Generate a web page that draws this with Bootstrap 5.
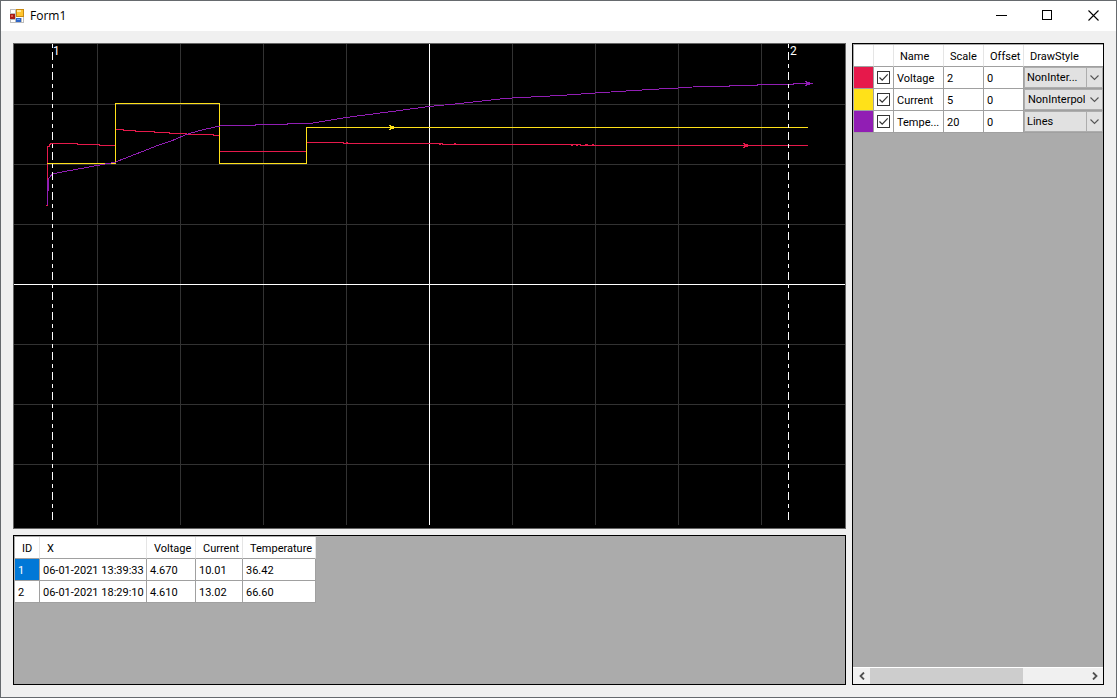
<!DOCTYPE html>
<html lang="en">
<head>
<meta charset="utf-8">
<meta name="viewport" content="width=device-width, initial-scale=1">
<title>Form1</title>
<link rel="stylesheet" href="https://cdn.jsdelivr.net/npm/bootstrap@5.3.0/dist/css/bootstrap.min.css">
<style>
body { font-family: Roboto, "Liberation Sans", sans-serif; font-size: 11px; line-height: 14px; color: #000; background: #f0f0f0; }
.app-window { border: 1px solid #666a6e; background: #f0f0f0; }
.title-bar { height: 30px; background: #fff; padding-left: 8px; }
.title-text { font-family: "Open Sans", sans-serif; font-size: 12px; line-height: 16px; margin-left: 5px; }
.win-btn { width: 46px; border: 0; padding: 0; background: none; }
.win-btn:hover { background: #e5e5e5; }
.workspace { display: grid; grid-template-columns: minmax(0, 1fr) 252px; grid-template-rows: minmax(0, 1fr) 150px; gap: 6px; padding: 12px; }
.plot-panel { border: 1px solid #646464; background: #000; }
.plot-panel svg { font-size: 12px; }
.side-panel { grid-column: 2; grid-row: 1 / span 2; }
.data-panel { border: 1px solid #000; background: #ababab; }
.grid-table { table-layout: fixed; border-collapse: separate; border-spacing: 0; margin: 1px 0 0 1px; background: #fff; }
.grid-table th, .grid-table td { height: 22px; padding: 2px 0 0 3px; border-right: 1px solid #a0a0a0; border-bottom: 1px solid #a0a0a0; white-space: nowrap; overflow: hidden; vertical-align: middle; }
.grid-table th { font-weight: 400; padding-left: 7px; border-right-color: #e5e5e5; }
.grid-table td.tick-cell { padding-top: 0; }
.grid-table .picked { background: #0078d7; color: #fff; }
.side-table { width: calc(100% - 1px); }
.side-table th { padding-left: 6px; }
.side-table td.combo-cell { padding: 0; border-right: 0; }
.side-table th:last-child { border-right: 0; }
.swatch-red { background: #e6194b; } .swatch-yellow { background: #ffe119; } .swatch-purple { background: #911eb4; }
.tick { appearance: none; display: block; width: 13px; height: 13px; margin: 0; border: 1px solid #333; background: #fff; }
.tick:checked { background: #fff url("data:image/svg+xml,%3Csvg xmlns='http://www.w3.org/2000/svg' viewBox='0 0 11 11'%3E%3Cpath d='M1.5 5.5l2.7 2.7L9.7 2.3' fill='none' stroke='%23333' stroke-width='1.2'/%3E%3C/svg%3E") center / 11px 11px no-repeat; }
.combo { appearance: none; display: block; width: 100%; height: 21px; border: 1px solid #adadad; border-radius: 0; padding: 1px 17px 0 2px; color: #000; line-height: 14px; background: #e1e1e1 url("data:image/svg+xml,%3Csvg xmlns='http://www.w3.org/2000/svg' viewBox='0 0 16 19'%3E%3Cpath d='M.5 0v19' stroke='%23adadad'/%3E%3Cpath d='M4.500 7.500l4 4 4-4' fill='none' stroke='%23555' stroke-width='1.1'/%3E%3C/svg%3E") right center / 16px 19px no-repeat; }
.combo-flat { background-image: url("data:image/svg+xml,%3Csvg xmlns='http://www.w3.org/2000/svg' viewBox='0 0 16 19'%3E%3Cpath d='M4.500 7.500l4 4 4-4' fill='none' stroke='%23555' stroke-width='1.1'/%3E%3C/svg%3E"); padding-left: 3px; }
.h-scroll { height: 17px; background: #f0f0f0; border-top: 1px solid #fff; }
.h-scroll button { width: 17px; border: 0; padding: 0; background: none; }
.h-thumb { width: 71%; background: #cdcdcd; }
</style>
</head>
<body>
<div class="app-window vh-100 d-flex flex-column">
  <header class="title-bar d-flex align-items-center flex-shrink-0">
    <svg width="16" height="16" viewBox="0 0 16 16" aria-hidden="true" shape-rendering="crispEdges">
      <path fill="#bdbdbd" d="M1 1h14v14H1z"/>
      <path fill="#fff" d="M2 2h4v3H2zM2 12h4v2H2zM7 9h7v1H7zM13 10h1v4h-1z"/>
      <path fill="#a81c14" d="M1 6h5v5H1z"/><path fill="#e0584a" d="M2 7h2v2H2z"/>
      <path fill="#c98a10" d="M7 1h8v8H7z"/><path fill="#ffc52e" d="M8 2h6v6H8z"/><path fill="#ffe79a" d="M8 2h4v2H8z"/>
      <path fill="#2e66c8" d="M7 10h5v4H7z"/><path fill="#6fa8f5" d="M8 11h3v1H8z"/>
    </svg>
    <span class="title-text me-auto">Form1</span>
    <button class="win-btn align-self-stretch" aria-label="Minimize"><svg width="11" height="12" class="d-block mx-auto" shape-rendering="crispEdges"><path d="M0 5.500h11" stroke="#000"/></svg></button>
    <button class="win-btn align-self-stretch" aria-label="Maximize"><svg width="11" height="12" class="d-block mx-auto" shape-rendering="crispEdges"><path d="M.5.5h9v9h-9z" fill="none" stroke="#000"/></svg></button>
    <button class="win-btn align-self-stretch" aria-label="Close"><svg width="11" height="12" class="d-block mx-auto"><path d="M.5.5l10 10M10.500.5l-10 10" stroke="#000" stroke-width="1.1"/></svg></button>
  </header>

  <main class="workspace flex-grow-1">
    <section class="plot-panel overflow-hidden" aria-label="Plot">
      <svg class="d-block w-100 h-100" viewBox="14 44 831 484" shape-rendering="crispEdges" fill="none">
        <path stroke="#323232" d="M14 104.500h831M14 164.500h831M14 224.500h831M14 344.500h831M14 404.500h831M14 464.500h831M97.500 44v481M180.500 44v481M263.500 44v481M346.500 44v481M512.500 44v481M595.500 44v481M678.500 44v481M761.500 44v481"/>
        <path stroke="#fff" d="M14 284.500h831M429.500 44v481"/>
        <!-- voltage -->
        <path stroke="#e6194b" d="M46 205.500h1.500V146.500h2v-2h1v-1H77.500v1H99.500v1H115.500V129.500H123.500v1H135.500v1H154.500v1H169.500v1H186.500v1H213.500v1H219.500V151.500H306.500V142.500H343.500v1H442.500v1H580.500v1H808"/>
        <path stroke="#e6194b" d="M346 142.500h2M439 144.500h2M454 143.500h2M571 145.500h2M576 145.500h2M585 144.500h3M592 144.500h2"/>
        <path fill="#e6194b" d="M743 143h2v1h3v1h1v1h-1v1h-3v1h-2v-1h1v-3h-1z"/>
        <!-- current -->
        <path stroke="#ffe119" d="M47 163.500H115.500V103.500H219.500V163.500H306.500V127.500H808"/>
        <path fill="#ffe119" d="M389 125h2v1h3v3h-3v1h-2v-1h1v-3h-1z"/>
        <!-- temperature -->
        <path stroke="#911eb4" d="M47.500 205V180M48.500 190.500V178.500L51.500 175 54 173.500 116 162 118 161 145 150.500 155 146.500 175 139.500 186 134.500 200 130.500 215 127 222 125.500H255.500v-1H287.500v-1H310L346 117.500 392 111.500 429 106.500 455 104 500 99 512 98 560 95.500 595 93 650 89.500 678 88 700 86.500H729.500v-1H757.500v-1H793.500v-1H813"/>
        <path fill="#911eb4" d="M805 81h2v1h3v3h-3v1h-2v-1h1v-3h-1z"/>
        <!-- cursors -->
        <path stroke="#fff" stroke-dasharray="4 4 8 4" d="M52.500 44V521M788.500 44V521"/>
        <text x="53" y="55" fill="#fff">1</text>
        <text x="790" y="55" fill="#fff">2</text>
      </svg>
    </section>

    <section class="data-panel overflow-hidden" aria-label="Cursor values">
      <table class="grid-table" style="width:301px">
        <colgroup><col style="width:25px"><col style="width:107px"><col style="width:49px"><col style="width:47px"><col style="width:73px"></colgroup>
        <thead><tr><th>ID</th><th>X</th><th>Voltage</th><th>Current</th><th>Temperature</th></tr></thead>
        <tbody>
          <tr><td class="picked">1</td><td>06-01-2021 13:39:33</td><td>4.670</td><td>10.01</td><td>36.42</td></tr>
          <tr><td>2</td><td>06-01-2021 18:29:10</td><td>4.610</td><td>13.02</td><td>66.60</td></tr>
        </tbody>
      </table>
    </section>

    <section class="data-panel side-panel d-flex flex-column overflow-hidden" aria-label="Series">
      <table class="grid-table side-table">
        <colgroup><col style="width:20px"><col style="width:20px"><col style="width:50px"><col style="width:40px"><col style="width:40px"><col></colgroup>
        <thead><tr><th></th><th></th><th>Name</th><th>Scale</th><th>Offset</th><th>DrawStyle</th></tr></thead>
        <tbody>
          <tr><td class="swatch-red"></td><td class="tick-cell"><input class="tick" type="checkbox" checked aria-label="Show Voltage"></td><td>Voltage</td><td>2</td><td>0</td><td class="combo-cell"><select class="combo" aria-label="Voltage draw style"><option>NonInter...</option></select></td></tr>
          <tr><td class="swatch-yellow"></td><td class="tick-cell"><input class="tick" type="checkbox" checked aria-label="Show Current"></td><td>Current</td><td>5</td><td>0</td><td class="combo-cell"><select class="combo combo-flat" aria-label="Current draw style"><option>NonInterpol</option></select></td></tr>
          <tr><td class="swatch-purple"></td><td class="tick-cell"><input class="tick" type="checkbox" checked aria-label="Show Temperature"></td><td>Tempe...</td><td>20</td><td>0</td><td class="combo-cell"><select class="combo" aria-label="Temperature draw style"><option>Lines</option></select></td></tr>
        </tbody>
      </table>
      <div class="h-scroll d-flex mt-auto">
        <button aria-label="Scroll left"><svg class="d-block mx-auto" width="8" height="8"><path d="M6 .5L2.500 4 6 7.500" fill="none" stroke="#505050" stroke-width="1.8"/></svg></button>
        <div class="flex-grow-1 d-flex"><div class="h-thumb"></div></div>
        <button aria-label="Scroll right"><svg class="d-block mx-auto" width="8" height="8"><path d="M2 .5L5.500 4 2 7.500" fill="none" stroke="#505050" stroke-width="1.8"/></svg></button>
      </div>
    </section>
  </main>
</div>
<script src="https://cdn.jsdelivr.net/npm/bootstrap@5.3.0/dist/js/bootstrap.bundle.min.js"></script>
</body>
</html>
